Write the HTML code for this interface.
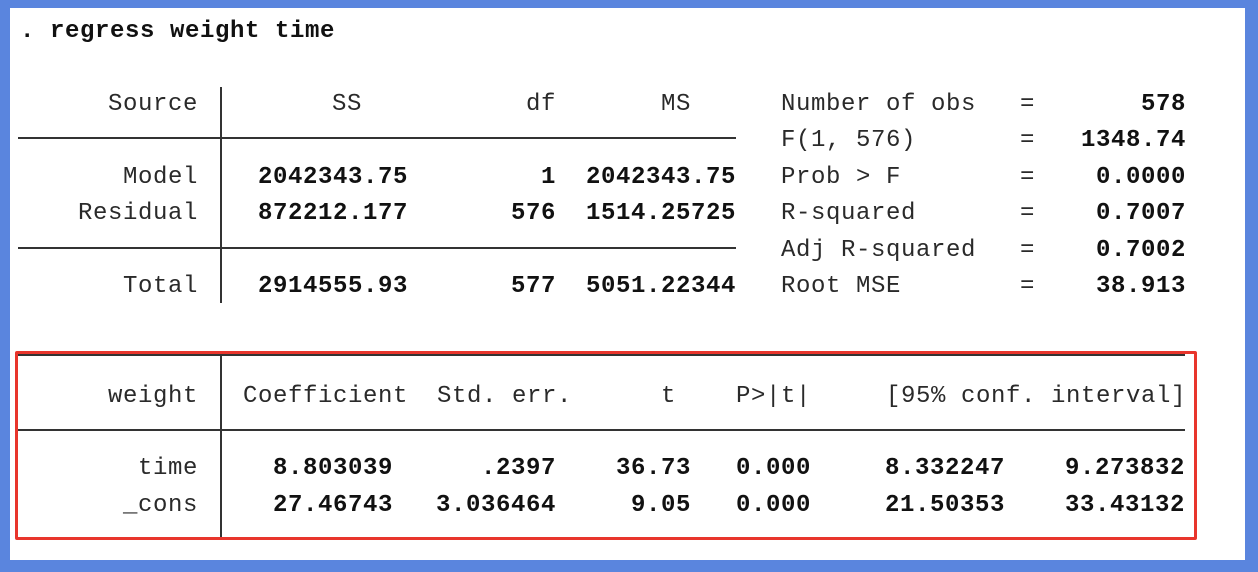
<!DOCTYPE html>
<html><head><meta charset="utf-8"><style>
html,body{margin:0;padding:0}
body{width:1258px;height:572px;background:#5a85de;position:relative;overflow:hidden}
#in{position:absolute;left:10px;top:8px;width:1235px;height:552px;background:#fff}
.t{position:absolute;margin-top:2px;font-family:"Liberation Mono",monospace;font-size:24px;letter-spacing:0.6px;line-height:30px;height:30px;white-space:pre;color:#2a2a2a}
.r{text-align:right}
.b{font-weight:bold;color:#111}
.h{position:absolute;height:2px;background:#333}
.v{position:absolute;width:2px;background:#333}
</style></head><body>
<div id="in"></div>
<div class="t b" style="left:20px;top:15px">. regress weight time</div>

<div class="v" style="left:220px;top:87px;height:216px"></div>
<div class="h" style="left:18px;top:137px;width:718px"></div>
<div class="h" style="left:18px;top:247px;width:718px"></div>

<div class="t r" style="right:1060px;top:88px">Source</div>
<div class="t" style="left:332px;top:88px">SS</div>
<div class="t r" style="right:702px;top:88px">df</div>
<div class="t r" style="right:567px;top:88px">MS</div>

<div class="t r" style="right:1060px;top:161px">Model</div>
<div class="t r" style="right:1060px;top:197px">Residual</div>
<div class="t r" style="right:1060px;top:270px">Total</div>

<div class="t r b" style="right:850px;top:161px">2042343.75</div>
<div class="t r b" style="right:850px;top:197px">872212.177</div>
<div class="t r b" style="right:850px;top:270px">2914555.93</div>
<div class="t r b" style="right:702px;top:161px">1</div>
<div class="t r b" style="right:702px;top:197px">576</div>
<div class="t r b" style="right:702px;top:270px">577</div>
<div class="t r b" style="right:522px;top:161px">2042343.75</div>
<div class="t r b" style="right:522px;top:197px">1514.25725</div>
<div class="t r b" style="right:522px;top:270px">5051.22344</div>

<div class="t" style="left:781px;top:88px">Number of obs</div>
<div class="t" style="left:781px;top:124px">F(1, 576)</div>
<div class="t" style="left:781px;top:161px">Prob &gt; F</div>
<div class="t" style="left:781px;top:197px">R-squared</div>
<div class="t" style="left:781px;top:234px">Adj R-squared</div>
<div class="t" style="left:781px;top:270px">Root MSE</div>
<div class="t" style="left:1020px;top:88px">=</div>
<div class="t" style="left:1020px;top:124px">=</div>
<div class="t" style="left:1020px;top:161px">=</div>
<div class="t" style="left:1020px;top:197px">=</div>
<div class="t" style="left:1020px;top:234px">=</div>
<div class="t" style="left:1020px;top:270px">=</div>
<div class="t r b" style="right:72px;top:88px">578</div>
<div class="t r b" style="right:72px;top:124px">1348.74</div>
<div class="t r b" style="right:72px;top:161px">0.0000</div>
<div class="t r b" style="right:72px;top:197px">0.7007</div>
<div class="t r b" style="right:72px;top:234px">0.7002</div>
<div class="t r b" style="right:72px;top:270px">38.913</div>

<div class="h" style="left:18px;top:354px;width:1167px"></div>
<div class="h" style="left:18px;top:429px;width:1167px"></div>
<div class="v" style="left:220px;top:354px;height:183px"></div>

<div class="t r" style="right:1060px;top:380px">weight</div>
<div class="t" style="left:243px;top:380px">Coefficient</div>
<div class="t" style="left:437px;top:380px">Std. err.</div>
<div class="t r" style="right:582px;top:380px">t</div>
<div class="t" style="left:736px;top:380px">P&gt;|t|</div>
<div class="t" style="left:886px;top:380px">[95% conf. interval]</div>

<div class="t r" style="right:1060px;top:452px">time</div>
<div class="t r" style="right:1060px;top:489px">_cons</div>
<div class="t r b" style="right:865px;top:452px">8.803039</div>
<div class="t r b" style="right:865px;top:489px">27.46743</div>
<div class="t r b" style="right:702px;top:452px">.2397</div>
<div class="t r b" style="right:702px;top:489px">3.036464</div>
<div class="t r b" style="right:567px;top:452px">36.73</div>
<div class="t r b" style="right:567px;top:489px">9.05</div>
<div class="t r b" style="right:447px;top:452px">0.000</div>
<div class="t r b" style="right:447px;top:489px">0.000</div>
<div class="t r b" style="right:253px;top:452px">8.332247</div>
<div class="t r b" style="right:253px;top:489px">21.50353</div>
<div class="t r b" style="right:73px;top:452px">9.273832</div>
<div class="t r b" style="right:73px;top:489px">33.43132</div>

<div style="position:absolute;left:15px;top:351px;width:1176px;height:183px;border:3px solid #e8352c;border-radius:2px"></div>
</body></html>
